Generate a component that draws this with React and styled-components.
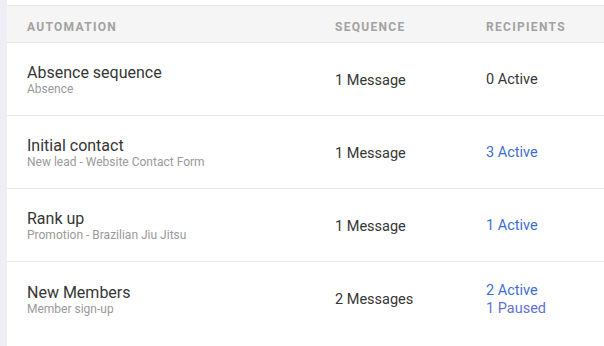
import React from "react";
import styled, { createGlobalStyle } from "styled-components";

const Global = createGlobalStyle`
  html, body { margin: 0; padding: 0; background: #fff; }
  body { font-family: Roboto, "Noto Sans", Arial, sans-serif; -webkit-font-smoothing: antialiased; }
`;

const Page = styled.div`
  display: flex;
  width: 604px;
  height: 346px;
  overflow: hidden;
`;

const SideStrip = styled.div`
  width: 7px;
  flex: none;
  background: #eeeef4;
`;

const Main = styled.div`
  flex: 1;
  padding-top: 5px;
  display: flex;
  flex-direction: column;
`;

const cols = "308px 151px 1fr";

const HeaderRow = styled.div`
  display: grid;
  grid-template-columns: ${cols};
  align-items: center;
  box-sizing: border-box;
  height: 38px;
  padding: 5px 0 0 20px;
  background: #f5f5f5;
  border-top: 1px solid #ebebeb;
  border-bottom: 1px solid #e6e6e6;
`;

const HeadCell = styled.div`
  font-size: 12px;
  font-weight: 700;
  letter-spacing: 1.3px;
  text-transform: uppercase;
  color: #a2a2a2;
`;

const Row = styled.div`
  display: grid;
  grid-template-columns: ${cols};
  align-items: center;
  box-sizing: border-box;
  height: 73px;
  padding: 2px 0 0 20px;
  border-bottom: ${(p) => (p.$last ? "none" : "1px solid #e8e8e8")};
`;

const NameCell = styled.div`
  display: flex;
  flex-direction: column;
`;

const Title = styled.div`
  font-size: 16px;
  line-height: 18px;
  color: #363636;
`;

const Sub = styled.div`
  font-size: 12px;
  line-height: 14px;
  color: #9a9a9a;
`;

const Seq = styled.div`
  font-size: 14.5px;
  color: #363636;
`;

const Recip = styled.div`
  display: flex;
  flex-direction: column;
  font-size: 14.5px;
  line-height: 18px;
`;

const Status = styled.span`
  color: ${(p) =>
    p.$tone === "active" ? "#3d6fd2" : p.$tone === "paused" ? "#6470d8" : "#363636"};
`;

const data = [
  { name: "Absence sequence", sub: "Absence", seq: "1 Message", recip: [["0 Active", "none"]] },
  { name: "Initial contact", sub: "New lead - Website Contact Form", seq: "1 Message", recip: [["3 Active", "active"]] },
  { name: "Rank up", sub: "Promotion - Brazilian Jiu Jitsu", seq: "1 Message", recip: [["1 Active", "active"]] },
  { name: "New Members", sub: "Member sign-up", seq: "2 Messages", recip: [["2 Active", "active"], ["1 Paused", "paused"]] },
];

export default function App() {
  return (
    <>
      <Global />
      <Page>
        <SideStrip />
        <Main>
          <HeaderRow>
            <HeadCell>Automation</HeadCell>
            <HeadCell>Sequence</HeadCell>
            <HeadCell>Recipients</HeadCell>
          </HeaderRow>
          {data.map((d, i) => (
            <Row key={d.name} $last={i === data.length - 1}>
              <NameCell>
                <Title>{d.name}</Title>
                <Sub>{d.sub}</Sub>
              </NameCell>
              <Seq>{d.seq}</Seq>
              <Recip>
                {d.recip.map(([t, tone]) => (
                  <Status key={t} $tone={tone}>{t}</Status>
                ))}
              </Recip>
            </Row>
          ))}
        </Main>
      </Page>
    </>
  );
}
